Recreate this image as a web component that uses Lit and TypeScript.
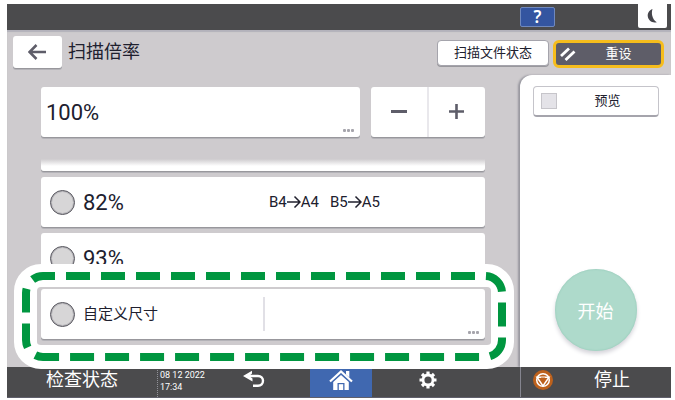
import { LitElement, html, css } from "lit";
import { customElement } from "lit/decorators.js";

@customElement("app-root")
export class AppRoot extends LitElement {
  static styles = css`
    :host {
      display: flex;
      flex-direction: column;
      box-sizing: border-box;
      min-height: 100vh;
      padding: 4px 4px 2px 7px;
      background: #fff;
      color: #20202e;
      font-family: Roboto, "Noto Sans CJK SC", sans-serif;
      font-size: 13px;
    }
    * {
      box-sizing: border-box;
    }
    button,
    input {
      margin: 0;
      padding: 0;
      border: 0;
      font: inherit;
      color: inherit;
      background: none;
    }
    svg {
      display: block;
    }
    .card {
      background: #fff;
      border-radius: 3px;
      box-shadow: 0 1px 0 #98979c, 0 2px 0 #b4b3b8;
    }
    .topbar {
      display: flex;
      justify-content: flex-end;
      height: 26px;
      padding-right: 4px;
      background: #4b4b4d;
    }
    .help {
      width: 35px;
      height: 20px;
      margin: 3px 83px 0 0;
      border: 1px solid #6f88bd;
      border-radius: 2px;
      background: #3455a0;
      color: #fff;
      font: 600 17px/18px "Noto Sans", sans-serif;
    }
    .moon {
      display: grid;
      place-items: center;
      width: 29px;
      height: 24px;
      border-radius: 0 0 2px 2px;
      background: #fff;
    }
    .main {
      display: flex;
      flex: 1;
      flex-direction: column;
      background: #cecbce;
      box-shadow: inset 0 2px 1px #b3b2bb;
    }
    .header {
      display: flex;
      height: 45px;
      padding: 6px 7px 0 6px;
    }
    .back {
      display: grid;
      place-items: center;
      width: 49px;
      height: 32px;
    }
    h1 {
      flex: 1;
      margin: 0 0 0 6px;
      font-size: 18px;
      font-weight: 400;
      line-height: 32px;
    }
    .status,
    .reset {
      height: 26px;
      margin-top: 4px;
      border-radius: 4px;
      line-height: 24px;
    }
    .status {
      width: 112px;
      margin-right: 4px;
      border: 1px solid #a5a4ac;
      background: #fff;
      box-shadow: 0 1px 0 #98979c;
    }
    .reset {
      display: flex;
      align-items: center;
      width: 111px;
      height: 28px;
      padding-left: 4px;
      border: 3px solid #f6bd1c;
      border-radius: 6px;
      background: #5e5d68;
      color: #fff;
    }
    .reset span {
      flex: 1;
    }
    .body {
      display: flex;
      flex: 1;
    }
    .settings {
      flex: 1;
      min-width: 0;
      padding: 12px 35px 28px 34px;
    }
    .ratio {
      display: flex;
      gap: 11px;
      height: 50px;
    }
    .value {
      position: relative;
      flex: 1;
    }
    .value input {
      width: 100%;
      height: 100%;
      padding-left: 5px;
      font-size: 22px;
    }
    .dots {
      position: absolute;
      right: 5px;
      bottom: 5px;
    }
    .stepper {
      display: flex;
      width: 114px;
    }
    .stepper button {
      display: grid;
      flex: 1;
      place-items: center;
    }
    .stepper button + button {
      border-left: 2px solid #e9e8ec;
    }
    .list {
      display: flex;
      flex-direction: column;
      gap: 6px;
      margin-top: 22px;
    }
    .partial {
      height: 12px;
      border-radius: 0 0 3px 3px;
      background: linear-gradient(#cecbce, #fff 7px);
    }
    .row {
      display: flex;
      position: relative;
      align-items: center;
      height: 50px;
      padding-left: 9px;
    }
    .row label {
      display: flex;
      flex: none;
      align-items: center;
      gap: 8px;
      width: 213px;
      font-size: 22px;
    }
    .row .name {
      font-size: 15px;
      line-height: 20px;
    }
    .sizes {
      display: flex;
      gap: 11px;
      padding-left: 6px;
      font-size: 15px;
    }
    .arrow {
      display: inline-block;
      vertical-align: -1px;
    }
    input[type="radio"] {
      appearance: none;
      width: 25px;
      height: 25px;
      border: 1px solid #55545c;
      border-radius: 50%;
      background: #d7d6d7;
      box-shadow: inset 0 0 0 1px #b7b6ba;
    }
    .size-input {
      flex: 1;
      min-width: 0;
      height: 34px;
      border-left: 2px solid #e1e0e6;
      padding: 0 24px 0 8px;
      font-size: 15px;
    }
    .callout {
      position: absolute;
      inset: -25px -29px -30px -27px;
      pointer-events: none;
      z-index: 1;
    }
    .callout::before {
      content: "";
      position: absolute;
      inset: 0;
      border: 23px solid #fff;
      border-bottom-width: 24px;
      border-radius: 27px;
    }
    .callout svg {
      position: absolute;
      inset: 0;
      width: 100%;
      height: 100%;
    }
    .callout rect {
      x: 12px;
      y: 12px;
      width: calc(100% - 24px);
      height: calc(100% - 24px);
      rx: 17px;
      fill: none;
      stroke: #009640;
      stroke-width: 8px;
      stroke-dasharray: 24 11;
      stroke-dashoffset: -23px;
    }
    .panel {
      display: flex;
      flex: none;
      flex-direction: column;
      align-items: center;
      justify-content: space-between;
      width: 151px;
      padding: 11px 0 16px;
      border-radius: 12px 0 0 0;
      background: #fff;
      box-shadow: -2px 0 2px #98979f;
    }
    .preview {
      display: flex;
      align-items: center;
      width: 126px;
      height: 31px;
      padding-left: 7px;
      border: 1px solid #c5c4ca;
      border-bottom: 2px solid #a5a4ac;
      border-radius: 4px;
      line-height: 24px;
    }
    .preview input {
      appearance: none;
      width: 16px;
      height: 16px;
      border: 1px solid #c6c5ca;
      background: #e4e3e8;
    }
    .preview span {
      flex: 1;
      padding-left: 38px;
    }
    .start {
      width: 82px;
      height: 82px;
      border-radius: 50%;
      background: #aedacb;
      box-shadow: inset 0 0 2px #8cc5b2, 0 3px 4px #d5d4da;
      color: #fff;
      font-size: 18px;
    }
    .footer {
      display: grid;
      grid-template-columns: 150px 50px 103fr 62px 148fr 151px;
      height: 31px;
      border-bottom: 1px solid #5f5f6b;
      background: #4b4b4d;
      color: #fff;
    }
    .footer button {
      display: flex;
      align-items: center;
      justify-content: center;
      height: 30px;
      padding-bottom: 4px;
      font-size: 18px;
      line-height: 22px;
    }
    .footer .undo {
      padding-right: 10px;
    }
    .footer .gear {
      padding-right: 37px;
    }
    .footer .home {
      background: #4068b0;
    }
    time {
      padding: 2px 0 0 2px;
      border-left: 1px dotted #929299;
      font-size: 9px;
      line-height: 12px;
      white-space: nowrap;
    }
    .footer .stop {
      justify-content: flex-start;
      gap: 41px;
      padding-left: 12px;
      border-left: 1px solid #85858f;
    }
  `;

  private dots() {
    return html`<svg class="dots" width="12" height="3" viewBox="0 0 12 3" fill="#a6a5ac" aria-hidden="true">
      <rect width="3" height="3" rx="1" /><rect x="4" width="3" height="3" rx="1" /><rect x="8" width="3" height="3" rx="1" />
    </svg>`;
  }

  private arrow() {
    return html`<svg class="arrow" width="14" height="13" viewBox="0 0 14 13" fill="none" stroke="#20202e" stroke-width="1.5" role="img" aria-label="→">
      <path d="M0 7H13M7.5 1.5L13 7L7.5 12.5" />
    </svg>`;
  }

  private option(percent: string, sizes: string[][]) {
    return html`<div class="row card">
      <label><input type="radio" name="ratio" />${percent}</label>
      <div class="sizes">${sizes.map(([from, to]) => html`<span>${from}${this.arrow()}${to}</span>`)}</div>
    </div>`;
  }

  render() {
    return html`
      <div class="topbar">
        <button class="help">?</button>
        <button class="moon" aria-label="Sleep">
          <svg width="14" height="16" viewBox="0 0 14 16" fill="#45454b">
            <path d="M6.5 1C3.2 2.2 1.4 5 1.8 8.6C2.3 12.6 6.2 15.4 10.8 14.2C8.4 12.8 6.8 10.6 6.2 7.6C5.7 5 5.9 2.8 6.5 1Z" />
          </svg>
        </button>
      </div>
      <main class="main">
        <header class="header">
          <button class="back card" aria-label="Back">
            <svg width="20" height="16" viewBox="0 0 20 16" fill="none" stroke="#5e5d69" stroke-width="2.5">
              <path d="M18 8H2M8.5 1L1.5 8L8.5 15" />
            </svg>
          </button>
          <h1>扫描倍率</h1>
          <button class="status">扫描文件状态</button>
          <button class="reset">
            <svg width="16" height="14" viewBox="0 0 16 14" stroke="#fff" stroke-width="2.8">
              <path d="M1 9L9 1.5M5.5 13L14.5 4.5" />
            </svg>
            <span>重设</span>
          </button>
        </header>
        <div class="body">
          <section class="settings">
            <div class="ratio">
              <div class="value card"><input type="text" aria-label="扫描倍率" value="100%" />${this.dots()}</div>
              <div class="stepper card">
                <button aria-label="Decrease">
                  <svg width="16" height="16" viewBox="0 0 16 16" stroke="#5e5d69" stroke-width="3"><path d="M0 7.5H16" /></svg>
                </button>
                <button aria-label="Increase">
                  <svg width="16" height="16" viewBox="0 0 16 16" stroke="#5e5d69" stroke-width="2.6"><path d="M0 7.5H15M7.5 0V15" /></svg>
                </button>
              </div>
            </div>
            <div class="list">
              <div class="partial card"></div>
              ${this.option("82%", [["B4", "A4"], ["B5", "A5"]])}
              ${this.option("93%", [])}
              <div class="row card">
                <label><input type="radio" name="ratio" /><span class="name">自定义尺寸</span></label>
                <input class="size-input" type="text" aria-label="自定义尺寸" />
                ${this.dots()}
                <div class="callout"><svg aria-hidden="true"><rect /></svg></div>
              </div>
            </div>
          </section>
          <aside class="panel">
            <label class="preview"><input type="checkbox" /><span>预览</span></label>
            <button class="start">开始</button>
          </aside>
        </div>
      </main>
      <footer class="footer">
        <button>检查状态</button>
        <time datetime="2022-12-08T17:34">08 12 2022<br />17:34</time>
        <button class="undo" aria-label="Return">
          <svg width="22" height="20" viewBox="0 0 22 20">
            <path d="M3 6H15C18 6 20 8 20 10.8S18 15.8 15 15.8H10" fill="none" stroke="#fff" stroke-width="2.4" />
            <path d="M0 6L9 .8V3.6L6.2 6L9.5 8.6V11.6Z" fill="#fff" />
          </svg>
        </button>
        <button class="home" aria-label="Home">
          <svg width="24" height="20" viewBox="0 0 24 20">
            <path d="M1 11.5L12 1.5L23 11.5" fill="none" stroke="#fff" stroke-width="2.2" />
            <path d="M17 1H20.3V7.4L17 4.4Z" fill="#fff" />
            <path d="M12 5L19.8 12V20H15.5V13H8.5V20H4.2V12Z" fill="#fff" />
            <path d="M9.8 20V14.2H14.2V20Z" fill="#fff" />
          </svg>
        </button>
        <button class="gear" aria-label="Settings">
          <svg width="18" height="18" viewBox="0 0 18 18" fill="none" stroke="#fff">
            <circle cx="9" cy="9" r="5" stroke-width="2.8" />
            <g stroke-width="3.2">
              <path d="M9 .5V3.5M9 14.5V17.5M.5 9H3.5M14.5 9H17.5M3 3L5.1 5.1M12.9 12.9L15 15M15 3L12.9 5.1M5.1 12.9L3 15" />
            </g>
          </svg>
        </button>
        <button class="stop">
          <svg width="20" height="20" viewBox="0 0 20 20" fill="none">
            <circle cx="10" cy="10" r="10" fill="#bd611c" />
            <circle cx="10" cy="10" r="6.3" stroke="#fff" stroke-width="1.5" />
            <path d="M4 7.2H16L10 16Z" stroke="#fff" stroke-width="1.5" />
            <path d="M7.8 7.5L10 11.5L12.2 7.5" fill="#bd611c" />
          </svg>
          <span>停止</span>
        </button>
      </footer>
    `;
  }
}
